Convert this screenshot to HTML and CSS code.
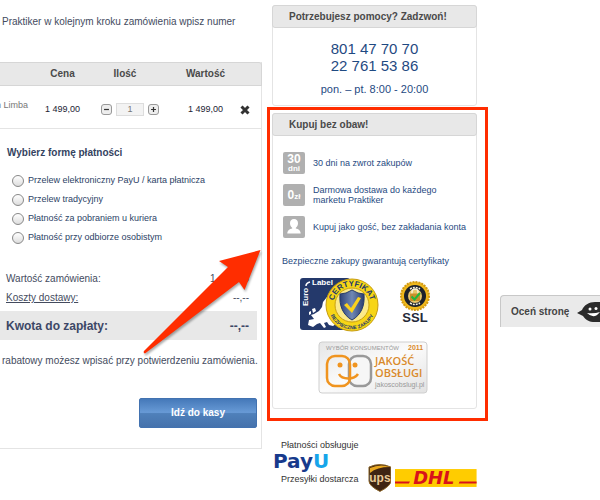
FILE: index.html
```html
<!DOCTYPE html>
<html lang="pl">
<head>
<meta charset="utf-8">
<title>Praktiker – koszyk</title>
<link rel="stylesheet" href="styles.css">
</head>
<body>
<div class="page">
  <main class="cart">
    <p class="intro">Praktiker w kolejnym kroku zamówienia wpisz numer</p>
    <div class="cart-box">
      <table class="items">
        <thead>
          <tr><th class="col-name"></th><th class="col-price">Cena</th><th class="col-qty">Ilość</th><th class="col-total">Wartość</th><th class="col-remove"></th></tr>
        </thead>
        <tbody>
          <tr>
            <td class="name"><span>n Limba</span></td>
            <td>1 499,00</td>
            <td>
              <div class="qty">
                <button type="button" aria-label="Mniej"><svg viewBox="0 0 11 11"><path d="M2.5 5.5h6"/></svg></button>
                <input type="text" value="1" aria-label="Ilość">
                <button type="button" aria-label="Więcej"><svg viewBox="0 0 11 11"><path d="M2.5 5.5h6M5.5 2.5v6"/></svg></button>
              </div>
            </td>
            <td class="col-total">1 499,00</td>
            <td class="col-remove"><button type="button" class="remove" aria-label="Usuń"><svg viewBox="0 0 10 10"><path d="M1.5 1.5l7 7M8.5 1.5l-7 7"/></svg></button></td>
          </tr>
        </tbody>
      </table>
      <fieldset class="payment">
        <legend>Wybierz formę płatności</legend>
        <label><input type="radio" name="pay">Przelew elektroniczny PayU / karta płatnicza</label>
        <label><input type="radio" name="pay">Przelew tradycyjny</label>
        <label><input type="radio" name="pay">Płatność za pobraniem u kuriera</label>
        <label><input type="radio" name="pay">Płatność przy odbiorze osobistym</label>
      </fieldset>
      <div class="sum"><span>Wartość zamówienia:</span><span>1 499,00</span></div>
      <div class="sum"><a href="#">Koszty dostawy:</a><span>--,--</span></div>
      <div class="sum total"><span>Kwota do zapłaty:</span><span>--,--</span></div>
      <p class="note">rabatowy możesz wpisać przy potwierdzeniu zamówienia.</p>
      <button type="button" class="checkout">Idź do kasy</button>
    </div>
  </main>

  <aside class="side">
    <section class="panel help">
      <h2>Potrzebujesz pomocy? Zadzwoń!</h2>
      <p class="phones">801 47 70 70<br>22 761 53 86</p>
      <p class="hours">pon. – pt. 8:00 - 20:00</p>
    </section>
    <section class="panel safe">
      <h2>Kupuj bez obaw!</h2>
      <ul class="benefits">
        <li><span class="badge days"><b>30</b><b>dni</b></span>30 dni na zwrot zakupów</li>
        <li><span class="badge price"><b>0</b><b>zł</b></span><span>Darmowa dostawa do każdego<br>marketu Praktiker</span></li>
        <li><span class="badge"><svg viewBox="0 0 22 22"><path fill="#fff" d="M11 3c2.600 0 4 1.700 4 4.200 0 2-1 3.800-2.200 4.600v.8c2.800.6 4.700 1.700 4.900 5H4.300c.2-3.300 2.100-4.400 4.900-5v-.8C8 11 7 9.200 7 7.200 7 4.700 8.400 3 11 3z"/></svg></span>Kupuj jako gość, bez zakładania konta</li>
      </ul>
      <p class="certs-title">Bezpieczne zakupy gwarantują certyfikaty</p>
      <div class="certs">
        <svg class="euro" viewBox="0 0 80 58" role="img" aria-label="Euro-Label Certyfikat">
          <defs>
            <linearGradient id="shield"><stop offset="0" stop-color="#2e4278"/><stop offset=".5" stop-color="#7088b4"/><stop offset="1" stop-color="#2a3c70"/></linearGradient>
            <path id="arcTop" d="M34.200 28A18.800 18.800 0 0 1 71.800 28"/>
            <path id="arcLow" d="M29.800 29A23.300 23.300 0 0 0 76.400 29"/>
          </defs>
          <rect x="1" y="1" width="50" height="52" rx="3" fill="#24396b"/>
          <path fill="#fff" d="M20 34l3-4 1-5 4-5 3-1 2 3-3 4 1 3 4-1 3 2v16l-4 3-4-1-2-3-3 1 2 4-2 1-4-5-3 1-4 3-5-2 1-5 5-1-3-4 3-1zM13 32l3-1 1 3-3 2zM10 35l2-1v3l-2 1z"/>
          <path d="M7 9q0-3 4-4" fill="none" stroke="#fff" stroke-width="1.500"/>
          <text x="13" y="8" class="lbl">Label</text>
          <text transform="rotate(-90 9 29)" x="9" y="29" class="lbl">Euro</text>
          <circle cx="53" cy="28" r="26" fill="#f7d516" stroke="#c79c10"/>
          <circle cx="53" cy="28" r="17" fill="#fbe98a" stroke="#c9a012"/>
          <path d="M53 13q6 4 12 4c1 12-3 21-12 26-9-5-13-14-12-26q6 0 12-4z" fill="url(#shield)" stroke="#24396b"/>
          <path d="M45 28l3-2 4 5 7-11 3 1-9 15z" fill="#fbd21c"/>
          <text class="arc"><textPath href="#arcTop" startOffset="50%" text-anchor="middle">CERTYFIKAT</textPath></text>
          <text class="arc small"><textPath href="#arcLow" startOffset="50%" text-anchor="middle">BEZPIECZNE ZAKUPY</textPath></text>
        </svg>
        <svg class="ssl" viewBox="0 0 34 48" role="img" aria-label="SSL">
          <circle cx="16" cy="15" r="14" fill="#f0b91c" stroke="#d29a12" stroke-width="2" stroke-dasharray="2 1"/>
          <circle cx="16" cy="15" r="11" fill="#1c212b"/>
          <path d="M11 8q5-3 10 0M11 22q5 3 10 0" fill="none" stroke="#f4f0dc" stroke-width="1.500" stroke-dasharray="2 1"/>
          <circle cx="16" cy="15" r="7" fill="#e8c66a"/>
          <path d="M13 13v-2a3 3 0 0 1 6 0v2" fill="none" stroke="#f7f0d4" stroke-width="1.500"/>
          <rect x="11" y="12.500" width="10" height="7.500" rx="1" fill="#c98e2a"/>
          <path d="M12.500 15.500l3 3 5.500-6.500" fill="none" stroke="#20b63c" stroke-width="2"/>
          <text x="16" y="41" text-anchor="middle">SSL</text>
        </svg>
        <svg class="quality" viewBox="0 0 112 54" role="img" aria-label="Jakość obsługi">
          <defs><linearGradient id="plate" x2="1" y2="1"><stop offset="0" stop-color="#e6e6e6"/><stop offset=".5" stop-color="#fbfbfb"/><stop offset="1" stop-color="#e2e2e2"/></linearGradient></defs>
          <rect x="1" y="1" width="108" height="51" rx="3" fill="url(#plate)" stroke="#cfcfcf"/>
          <text x="8" y="9" class="q-top">WYBÓR KONSUMENTÓW</text>
          <text x="90" y="9" class="q-year">2011</text>
          <rect x="31" y="15" width="22" height="30" rx="8" fill="#f6f6f6" stroke="#999" stroke-width="2.500"/>
          <rect x="9" y="15" width="23" height="30" rx="8" fill="none" stroke="#f0941f" stroke-width="2.500"/>
          <circle cx="22" cy="24" r="2.500" fill="#f0941f"/><circle cx="37" cy="24" r="2.500" fill="#f0941f"/>
          <path d="M21 33c3 6 15 6 19 0" fill="none" stroke="#f0941f" stroke-width="2.500"/>
          <text x="57" y="24" class="q-name">JAKOŚĆ</text>
          <text x="57" y="36" class="q-name">OBSŁUGI</text>
          <text x="57" y="46" class="q-url">jakoscobslugi.pl</text>
        </svg>
      </div>
    </section>
    <footer class="partners">
      <div class="partner-names">
        <span>Płatności obsługuje</span>
        <svg class="payu" viewBox="0 0 60 20" role="img" aria-label="PayU"><text x="0" y="16">Pay<tspan class="u">U</tspan></text></svg>
        <span>Przesyłki dostarcza</span>
      </div>
      <svg class="ups" viewBox="0 0 24 28" role="img" aria-label="UPS">
        <path d="M1 3q11-5 22 0v14q0 5-11 10.500Q1 22 1 17z" fill="#3f2412" stroke="#8a6426"/>
        <path d="M2 4q10-4.500 20-1Q9 3 2 9z" fill="#e9a820"/>
        <text x="12" y="18" text-anchor="middle">ups</text>
      </svg>
      <svg class="dhl" viewBox="0 0 82 18" role="img" aria-label="DHL">
        <rect width="82" height="18" fill="#fc0"/>
        <path d="M0 12.500h15l-1 2H0zM65 12.500h17v2H64z" fill="#d8121a"/>
        <text x="39" y="15" text-anchor="middle">DHL</text>
      </svg>
    </footer>
  </aside>
</div>

<a href="#" class="rate">Oceń stronę
  <svg viewBox="0 0 26 20"><path fill="#2b2b2b" d="M0 11l5-3C7 3 12 0 18 0h8v20h-8c-6 0-9-2-12-6z"/><path d="M10 11q7 7 13-1-6 2-13 1z" fill="#fff"/><circle cx="13" cy="7" r="1.500" fill="#fff"/><circle cx="19" cy="6.500" r="1.500" fill="#fff"/></svg>
</a>
<div class="highlight"></div>
<svg class="arrow" viewBox="0 0 130 116"><path fill="#ff2d00" d="M122.500 6L81 17l9 6L6 107q-1 2 1 2.500L101 38l5.500 8z"/></svg>
</body>
</html>
```
FILE: styles.css
```css
* { box-sizing: border-box; }
body { margin: 0; background: #fff; color: #444b5e; font: 10px/14px "Liberation Sans", Arial, sans-serif; }
p, h2, ul, fieldset { margin: 0; padding: 0; border: 0; }
button { font: inherit; padding: 0; cursor: pointer; }
svg { display: block; }
.page { display: grid; grid-template-columns: minmax(0, 1fr) 205px; column-gap: 10px; padding-right: 123px; align-items: start; }

.intro { padding: 15px 2px 33px; white-space: nowrap; }
.cart-box { border-right: 1px solid #e4e4e4; border-bottom: 1px solid #e4e4e4; padding: 0 4px 20px 0; }
.items { width: calc(100% + 5px); margin-right: -5px; border-collapse: separate; border-spacing: 0; table-layout: fixed; text-align: center; }
.items th { height: 24px; padding: 0; background: #e8e8e8; border: solid #d6d6d6; border-width: 1px 0; color: #4a4a4a; font-size: 10px; }
.items th:last-child { border-right-width: 1px; border-top-right-radius: 3px; }
.items td { height: 43px; padding: 4px 0 0; border-bottom: 1px solid #e4e4e4; font-size: 9px; color: #223; }
.col-name { width: 30px; }
.col-price { width: 65px; }
.col-qty { width: 70px; }
.col-remove { width: 30px; }
.items .col-qty { padding-right: 10px; }
.items .col-total { padding-left: 14px; }
.items .col-remove { padding-right: 4px; }
.items td.name { color: #777; padding: 0 2px 4px 0; }
.name span { display: flex; justify-content: flex-end; white-space: nowrap; }
.qty { display: flex; justify-content: center; align-items: center; gap: 4px; }
.qty button { width: 11px; height: 11px; border: 1px solid #999; border-radius: 3px; background: #eee; }
.qty svg { width: 9px; height: 9px; stroke: #333; stroke-width: 1.5; }
.qty input { width: 28px; height: 13px; padding: 0; border: 1px solid #ddd; background: #f3f3f3; color: #777; font: inherit; text-align: center; }
.remove { border: 0; background: none; vertical-align: middle; }
.remove svg { width: 10px; height: 10px; stroke: #333; stroke-width: 3; }

.payment { padding: 17px 0 0 7px; font-size: 9px; color: #2c4266; }
.payment legend { float: left; width: 100%; padding: 0; margin-bottom: 10px; font-size: 10px; font-weight: bold; color: #34435f; }
.payment label { display: flex; clear: both; align-items: center; gap: 4px; height: 19px; }
.payment input { appearance: none; width: 12px; height: 12px; margin: 2px 0 0 5px; border: 1px solid #888; border-radius: 50%; background: linear-gradient(#fff, #ddd); }
.sum { display: flex; justify-content: space-between; padding: 0 8px 5px 6px; }
.payment + .sum { padding-top: 26px; }
.sum a { color: inherit; }
.sum.total { align-items: center; height: 29px; margin-top: 1px; padding-bottom: 0; background: #e8e8e8; color: #3c4766; font-size: 12px; font-weight: bold; }
.note { padding: 14px 0 30px 2px; white-space: nowrap; }
.checkout { display: block; width: 118px; height: 30px; margin-left: auto; border: 1px solid #4272b0; border-radius: 2px; background: linear-gradient(#4579b9, #689ad6 48%, #4f80ba 52%, #4572ac); color: #fff; font-weight: bold; }

.side { padding-top: 5px; }
.panel { border: 1px solid #e4e4e4; border-radius: 3px; color: #1f4a82; }
.panel h2 { margin: -1px -1px 0; height: 23px; padding-left: 16px; border: 1px solid #d6d6d6; border-radius: 3px; background: #e8e8e8; color: #4a4a4a; font-size: 10px; line-height: 21px; text-align: left; }
.help { height: 101px; text-align: center; }
.phones { padding-top: 12px; font-size: 15px; line-height: 17px; }
.hours { padding-top: 8px; font-size: 11px; }
.safe { margin-top: 7px; padding-bottom: 13px; }
.benefits { display: grid; gap: 10px; padding: 16px 0 0 10px; list-style: none; font-size: 9px; line-height: 10px; }
.benefits li { display: flex; align-items: center; gap: 8px; white-space: nowrap; }
.badge { display: flex; flex: none; width: 22px; height: 22px; align-items: center; justify-content: center; border-radius: 2px; background: #b0b0b0; color: #fff; font-size: 8px; }
.badge svg { width: 22px; height: 22px; }
.days { flex-direction: column; line-height: 8px; }
.days b:first-child, .price b:first-child { font-size: 12px; line-height: 11px; }
.price { align-items: baseline; line-height: 22px; }
.price b:first-child { line-height: 22px; }
.certs-title { padding: 16px 0 9px 9px; font-size: 9px; white-space: nowrap; }
.certs { display: flex; flex-wrap: wrap; column-gap: 20px; row-gap: 6px; padding: 0 26px; }
.euro { width: 80px; height: 58px; }
.ssl { width: 34px; height: 48px; margin-top: 4px; }
.quality { width: 112px; height: 54px; margin-left: 19px; }
.lbl { fill: #fff; font-size: 8px; font-weight: bold; }
.arc { fill: #24396b; font: bold 8px "Liberation Sans", sans-serif; }
.arc.small { font-size: 5px; }
.ssl text { fill: #252a3a; font: bold 13px "Liberation Sans", sans-serif; }
.q-top { fill: #999; font-size: 6px; }
.q-year { fill: #d98a2c; font-size: 7px; font-weight: bold; }
.q-name { fill: #d98a2c; font: 600 11px "Open Sans", sans-serif; }
.q-url { fill: #999; font-size: 7px; }

.partners { display: flex; align-items: flex-end; gap: 4px; padding-top: 29px; font-size: 9px; color: #333; }
.partner-names { display: grid; width: 92px; padding: 0 0 6px 1px; white-space: nowrap; }
.partner-names span { padding-left: 8px; }
.payu { width: 60px; height: 20px; overflow: visible; }
.payu text { fill: #173a8c; font: bold 20px "DejaVu Sans", sans-serif; }
.payu .u { fill: #16a5ea; }
.ups { width: 24px; height: 28px; }
.ups text { fill: #e8c896; font: bold 12px "Liberation Sans", sans-serif; }
.dhl { width: 82px; height: 18px; margin-bottom: 5px; }
.dhl text { fill: #d8121a; font: italic bold 18px "DejaVu Sans", sans-serif; }

.rate { position: fixed; top: 295px; right: 0; display: flex; align-items: center; gap: 8px; width: 100px; height: 32px; padding-left: 10px; border: solid #c8c8c8; border-width: 1px 0 0 1px; border-radius: 4px 0 0 0; background: #eaeaea; color: #444; font-weight: bold; text-decoration: none; white-space: nowrap; overflow: hidden; }
.rate svg { flex: none; width: 26px; height: 20px; }
.highlight { position: absolute; top: 107px; right: 112px; width: 221px; height: 314px; border: 3px solid #ff2d00; pointer-events: none; }
.arrow { position: absolute; top: 244px; right: 332px; width: 130px; height: 116px; filter: drop-shadow(1px 2px 1px #0005); pointer-events: none; }
```
